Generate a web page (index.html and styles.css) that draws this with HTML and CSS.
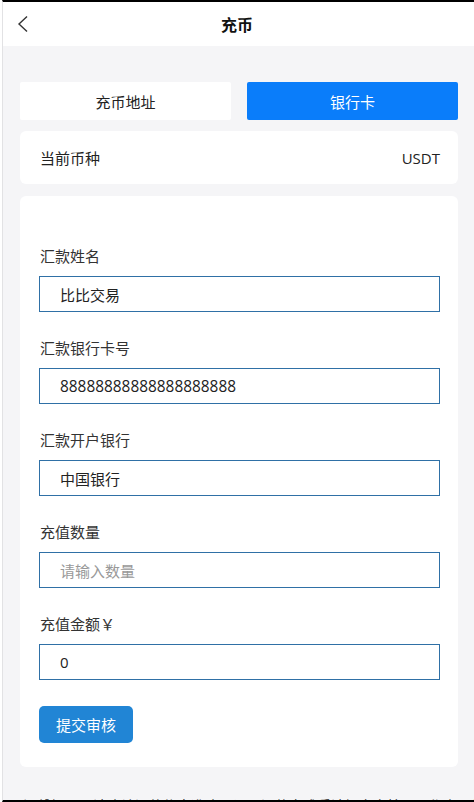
FILE: index.html
```
<!DOCTYPE html>
<html lang="zh-CN">
<head>
<meta charset="utf-8">
<title>充币</title>
<link rel="stylesheet" href="styles.css">
</head>
<body>
<div class="screen">
  <header class="header">
    <span class="back">
      <svg width="12" height="18" viewBox="0 0 12 18"><path d="M10 1.5 L2 9 L10 16.5" fill="none" stroke="#333" stroke-width="1.4"/></svg>
    </span>
    <h1 class="title">充币</h1>
  </header>
  <main class="main">
    <div class="tabs">
      <div class="tab">充币地址</div>
      <div class="tab active">银行卡</div>
    </div>
    <div class="card row">
      <span>当前币种</span>
      <span class="latin">USDT</span>
    </div>
    <div class="card form">
      <div class="field">
        <div class="label">汇款姓名</div>
        <div class="input">比比交易</div>
      </div>
      <div class="field">
        <div class="label">汇款银行卡号</div>
        <div class="input latin digits">88888888888888888888</div>
      </div>
      <div class="field">
        <div class="label">汇款开户银行</div>
        <div class="input">中国银行</div>
      </div>
      <div class="field">
        <div class="label">充值数量</div>
        <div class="input placeholder">请输入数量</div>
      </div>
      <div class="field">
        <div class="label">充值金额￥</div>
        <div class="input latin">0</div>
      </div>
      <button class="submit">提交审核</button>
    </div>
    <p class="note">温馨提示：请确认汇款信息准确无误，汇款完成后请提交审核，工作人员将尽快为您处理到账。</p>
  </main>
</div>
</body>
</html>
```
FILE: styles.css
```
* { box-sizing: border-box; }
html, body { margin: 0; padding: 0; background: #fff; }
body {
  font-family: "Noto Sans", "Noto Sans CJK SC", sans-serif;
  color: #222;
  font-size: 15px;
}
.screen {
  height: 802px;
  margin-left: 2px;
  border-left: 1px solid #e2e2e4;
  border-top: 2px solid #000;
  border-bottom: 2px solid #000;
  display: flex;
  flex-direction: column;
  overflow: hidden;
}
.header {
  height: 44px;
  flex: none;
  background: #fff;
  display: flex;
  align-items: center;
  justify-content: center;
  position: relative;
}
.back {
  position: absolute;
  left: 14px;
  top: 13px;
  width: 12px;
  height: 18px;
  display: flex;
}
.title {
  margin: 0 0 0 -3px;
  font-size: 16px;
  font-weight: 700;
  color: #111;
}
.main {
  flex: 1;
  background: #f5f5f7;
  padding: 36px 16px 0 17px;
  overflow: hidden;
}
.tabs {
  display: grid;
  grid-template-columns: 1fr 1fr;
  column-gap: 16px;
}
.tab {
  height: 38px;
  background: #fff;
  border-radius: 2px;
  display: flex;
  align-items: center;
  justify-content: center;
  font-size: 15px;
  color: #222;
}
.tab.active {
  background: #0a7dfa;
  color: #fff;
}
.card {
  background: #fff;
  border-radius: 6px;
}
.row {
  margin-top: 11px;
  height: 53px;
  display: flex;
  align-items: center;
  justify-content: space-between;
  padding: 0 18px 0 20px;
  font-size: 15px;
}
.latin { font-family: "Open Sans", "Noto Sans CJK SC", sans-serif; }
.form {
  margin-top: 12px;
  padding: 50px 18px 24px 19px;
}
.field { margin-bottom: 26px; }
.label {
  line-height: 20px;
  height: 20px;
  margin-bottom: 10px;
  padding-left: 1px;
  font-size: 15px;
  color: #333;
}
.input {
  height: 36px;
  border: 1px solid #2f70a6;
  display: flex;
  align-items: center;
  padding-left: 20px;
  font-size: 15px;
  color: #222;
}
.input.digits { font-size: 15.4px; }
.input.placeholder { color: #999; }
.submit {
  display: block;
  width: 94px;
  height: 37px;
  border: none;
  border-radius: 5px;
  background: #2185d5;
  color: #fff;
  font-family: "Noto Sans CJK SC", sans-serif;
  font-size: 15px;
  padding: 0;
}
.note {
  margin: 29px 0 0 3px;
  font-size: 14px;
  line-height: 20px;
  color: #333;
  white-space: nowrap;
}
```
